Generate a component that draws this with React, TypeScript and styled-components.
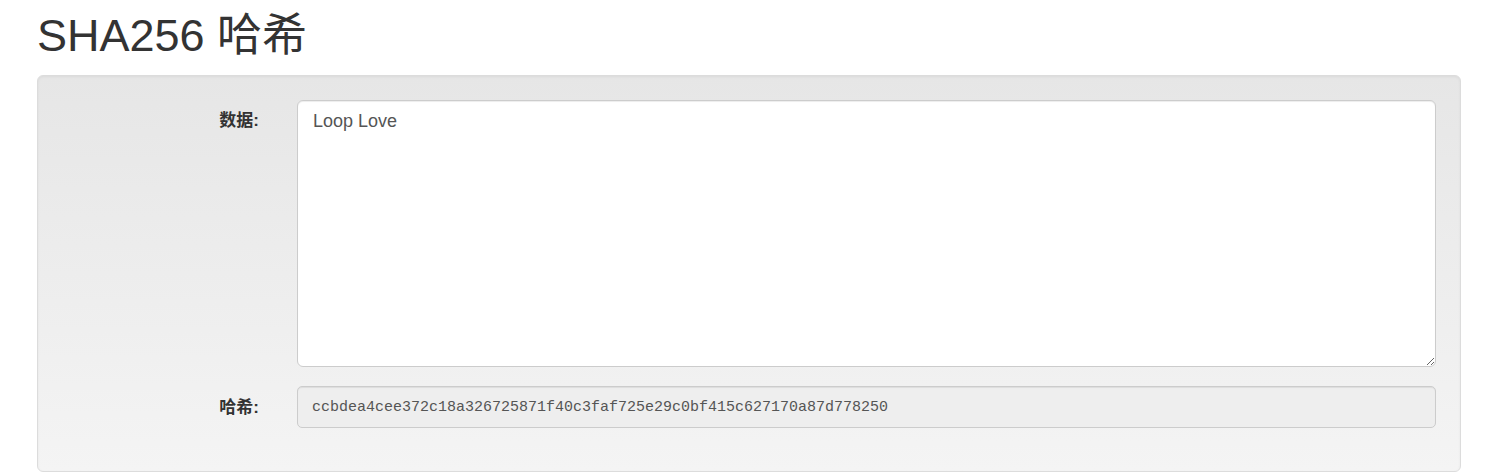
import React from "react";
import styled, { createGlobalStyle } from "styled-components";

const Global = createGlobalStyle`
  html, body { margin: 0; padding: 0; background: #fff; }
  body {
    font-family: "Liberation Sans", Arial, "Noto Sans CJK SC", sans-serif;
    color: #333;
  }
  * { box-sizing: border-box; }
`;

const Page = styled.div`
  padding: 0 29px 0 37px;
`;

const Title = styled.h1`
  margin: 12px 0 15px;
  font-size: 45px;
  line-height: 48px;
  font-weight: 400;
  color: #333;
  font-family: "Liberation Sans", Arial, "Noto Sans CJK SC", sans-serif;
`;

const Well = styled.div`
  border: 1px solid #dcdcdc;
  border-radius: 6px;
  background-image: linear-gradient(to bottom, #e6e6e6 0%, #f4f4f4 100%);
  box-shadow: inset 0 1px 3px rgba(0, 0, 0, 0.05), 0 1px 0 rgba(255, 255, 255, 0.1);
  padding: 24px 24px 26px;
  display: flex;
  flex-direction: column;
  gap: 19px;
  min-height: 397px;
`;

const Row = styled.div`
  display: grid;
  grid-template-columns: 197px 1fr;
  column-gap: 38px;
  align-items: start;
`;

const Label = styled.label<{ $top: number }>`
  text-align: right;
  font-weight: 700;
  font-size: 17px;
  line-height: 22px;
  padding-top: ${(p) => p.$top}px;
  color: #333;
`;

const TextArea = styled.textarea`
  display: block;
  width: 100%;
  height: 267px;
  border: 1px solid #ccc;
  border-radius: 6px;
  background: #fff;
  box-shadow: inset 0 1px 1px rgba(0, 0, 0, 0.075);
  padding: 8px 15px;
  font-family: "Liberation Sans", Arial, sans-serif;
  font-size: 18px;
  line-height: 24px;
  color: #555;
  outline: none;
  resize: vertical;
`;

const HashBox = styled.div`
  height: 42px;
  border: 1px solid #ccc;
  border-radius: 5px;
  background: #eee;
  box-shadow: inset 0 1px 1px rgba(0, 0, 0, 0.075);
  padding: 0 14px;
  font-family: "Liberation Mono", "Courier New", monospace;
  font-size: 15px;
  line-height: 42px;
  color: #555;
  white-space: nowrap;
  overflow: hidden;
`;

export default function App() {
  return (
    <>
      <Global />
      <Page>
        <Title>SHA256 哈希</Title>
        <Well>
          <Row>
            <Label $top={10}>数据:</Label>
            <TextArea defaultValue="Loop Love" />
          </Row>
          <Row>
            <Label $top={11}>哈希:</Label>
            <HashBox>ccbdea4cee372c18a326725871f40c3faf725e29c0bf415c627170a87d778250</HashBox>
          </Row>
        </Well>
      </Page>
    </>
  );
}
